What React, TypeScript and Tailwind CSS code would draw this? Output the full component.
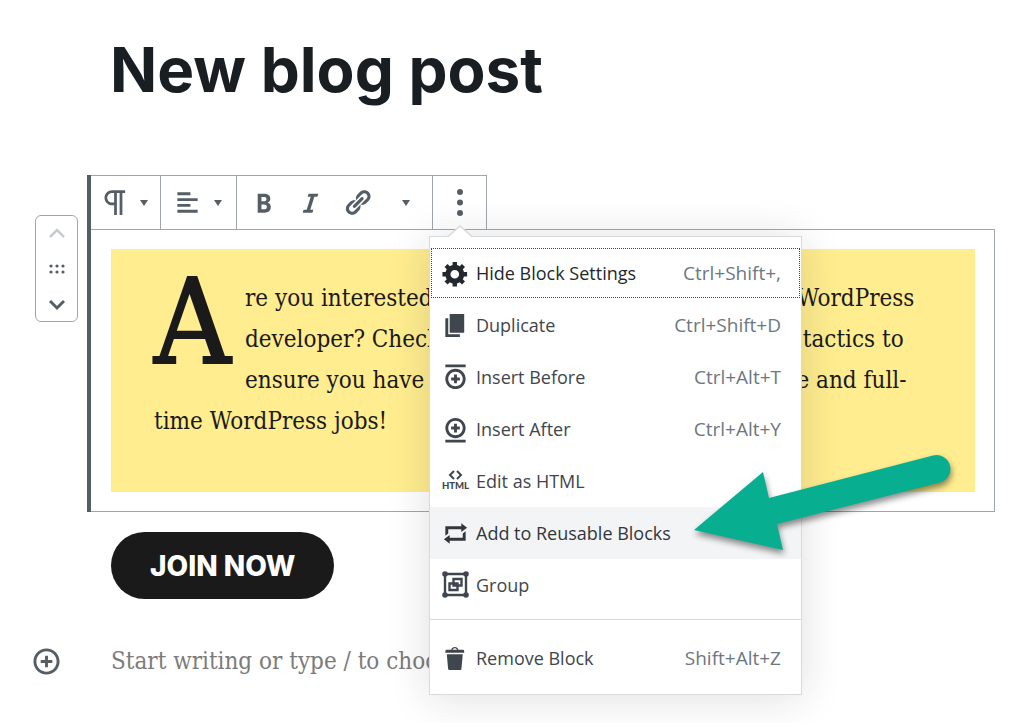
import type { ReactNode } from 'react';

type IconName =
  | 'gear'
  | 'duplicate'
  | 'before'
  | 'after'
  | 'repeat'
  | 'trash'
  | 'bold'
  | 'italic'
  | 'link'
  | 'align'
  | 'insert';

interface MenuItem {
  label: string;
  icon: ReactNode;
  shortcut?: string;
  state?: 'focused' | 'active';
}

const paths: Record<IconName, string> = {
  gear: 'M18 12h-2.18c-.17.7-.44 1.35-.81 1.93l1.54 1.54-2.1 2.1-1.54-1.54c-.58.36-1.23.63-1.91.79V19H8v-2.18c-.68-.16-1.33-.43-1.91-.79l-1.54 1.54-2.12-2.12 1.54-1.54c-.36-.58-.63-1.23-.79-1.91H1V9.03h2.17c.16-.7.44-1.35.8-1.94L2.43 5.55l2.1-2.1 1.54 1.54c.58-.37 1.24-.64 1.93-.81V2h3v2.18c.68.16 1.33.43 1.91.79l1.54-1.54 2.12 2.12-1.54 1.54c.36.59.64 1.24.8 1.94H18V12zm-8.5 1.5c1.66 0 3-1.34 3-3s-1.34-3-3-3-3 1.34-3 3 1.34 3 3 3z',
  duplicate: 'M6 15V2h10v13H6zm-1 1h8v2H3V5h2v11z',
  before:
    'M11 8H9v2H7v2h2v2h2v-2h2v-2h-2V8zm-1-4c-3.9 0-7 3.1-7 7s3.1 7 7 7 7-3.1 7-7-3.1-7-7-7zm0 12c-2.8 0-5-2.2-5-5s2.2-5 5-5 5 2.2 5 5-2.2 5-5 5zM3 1h14v2H3V1z',
  after:
    'M9 12h2v-2h2V8h-2V6H9v2H7v2h2v2zm1 4c3.9 0 7-3.1 7-7s-3.1-7-7-7-7 3.1-7 7 3.1 7 7 7zm0-12c2.8 0 5 2.2 5 5s-2.2 5-5 5-5-2.2-5-5 2.2-5 5-5zM3 19h14v-2H3v2z',
  repeat: 'M5 7v3l-2 1.5V5h11V3l4 3.01L14 9V7H5zm10 6v-3l2-1.5V15H6v2l-4-3.01L6 11v2h9z',
  trash:
    'M12 4h3c.6 0 1 .4 1 1v1H3V5c0-.6.5-1 1-1h3c.2-1.1 1.3-2 2.5-2s2.3.9 2.5 2zM8 4h3c-.2-.6-.9-1-1.5-1S8.2 3.4 8 4zM4 7h11l-.9 10.1c0 .5-.5.9-1 .9H5.9c-.5 0-.9-.4-1-.9L4 7z',
  bold: 'M6 4v13h4.54c1.37 0 2.46-.33 3.26-1 .8-.66 1.2-1.58 1.2-2.77 0-.84-.17-1.51-.51-2.01s-.9-.85-1.67-1.03v-.09c.57-.1 1.02-.4 1.36-.9s.51-1.13.51-1.91c0-1.14-.39-1.98-1.17-2.5C12.75 4.26 11.5 4 9.78 4H6zm2.57 5.15V6.26h1.36c.73 0 1.27.11 1.61.32.34.22.51.58.51 1.07 0 .54-.16.92-.47 1.15s-.82.35-1.51.35h-1.5zm0 2.19h1.6c1.44 0 2.16.53 2.16 1.61 0 .6-.17 1.05-.51 1.34s-.86.43-1.57.43H8.57v-3.38z',
  italic: 'M14.78 6h-2.13l-2.8 9h2.12l-.62 2H4.6l.62-2h2.14l2.8-9H8.03l.62-2h6.75z',
  link: 'M17.74 2.76c1.68 1.69 1.68 4.41 0 6.1l-1.53 1.52c-1.12 1.12-2.7 1.47-4.14 1.09l2.62-2.61.76-.77.76-.76c.84-.84.84-2.2 0-3.04-.84-.85-2.2-.85-3.04 0l-.77.76-3.38 3.38c-.37-1.44-.02-3.02 1.1-4.14l1.52-1.53c1.69-1.68 4.42-1.68 6.1 0zM8.59 13.43l5.34-5.34c.42-.42.42-1.1 0-1.52-.44-.43-1.13-.39-1.53 0l-5.33 5.34c-.42.42-.42 1.1 0 1.52.44.43 1.13.39 1.52 0zm-.76 2.29l4.14-4.15c.38 1.44.03 3.02-1.09 4.14l-1.52 1.53c-1.69 1.68-4.41 1.68-6.1 0-1.68-1.68-1.68-4.42 0-6.1l1.53-1.52c1.12-1.12 2.7-1.47 4.14-1.1l-4.14 4.15c-.85.84-.85 2.2 0 3.05.84.84 2.2.84 3.04 0z',
  align: 'M12 5V3H3v2h9zm5 4V7H3v2h14zm-5 4v-2H3v2h9zm5 4v-2H3v2h14z',
  insert:
    'M10 1c-5 0-9 4-9 9s4 9 9 9 9-4 9-9-4-9-9-9zm0 16c-3.9 0-7-3.1-7-7s3.1-7 7-7 7 3.1 7 7-3.1 7-7 7zm1-11H9v3H6v2h3v3h2v-3h3V9h-3V6z',
};

function Icon({ name }: { name: IconName }) {
  return (
    <svg viewBox="0 0 20 20" className="size-[29px] shrink-0" fill="currentColor" aria-hidden="true">
      <path d={paths[name]} />
    </svg>
  );
}

function HtmlIcon() {
  return (
    <svg viewBox="0 0 29 29" className="size-[29px] shrink-0" aria-hidden="true">
      <path d="M13 4l-4 4 4 4M16 4l4 4-4 4" fill="none" stroke="currentColor" strokeWidth="2" />
      <text x="14.5" y="22" textAnchor="middle" fontSize="9.5" fontWeight="900" fontFamily="Lato, sans-serif" fill="currentColor">
        HTML
      </text>
    </svg>
  );
}

function GroupIcon() {
  return (
    <svg viewBox="0 0 29 29" className="size-[29px] shrink-0" fill="none" stroke="currentColor" strokeWidth="2.4" aria-hidden="true">
      <path d="M4 3h21v21H4z" />
      <path d="M12.500 8h8v6.500h-8zM8.500 12.500h8v6.500h-8z" />
      <g fill="currentColor" stroke="none">
        <circle cx="4" cy="3" r="2.8" />
        <circle cx="25" cy="3" r="2.8" />
        <circle cx="4" cy="24" r="2.8" />
        <circle cx="25" cy="24" r="2.8" />
      </g>
    </svg>
  );
}

function ParagraphIcon() {
  return (
    <svg viewBox="0 0 24 24" className="size-[33px] shrink-0" fill="currentColor" aria-hidden="true">
      <path d="M11 5v7H9.5C7.6 12 6 10.4 6 8.5S7.6 5 9.5 5H11m8-2H9.5C6.5 3 4 5.5 4 8.5S6.5 14 9.5 14H11v7h2V5h2v16h2V5h2V3z" />
    </svg>
  );
}

function Caret() {
  return (
    <svg viewBox="0 0 8 6" className="h-[6px] w-2 shrink-0" fill="currentColor" aria-hidden="true">
      <path d="M0 0h8L4 6z" />
    </svg>
  );
}

const items: MenuItem[] = [
  { label: 'Hide Block Settings', icon: <Icon name="gear" />, shortcut: 'Ctrl+Shift+,', state: 'focused' },
  { label: 'Duplicate', icon: <Icon name="duplicate" />, shortcut: 'Ctrl+Shift+D' },
  { label: 'Insert Before', icon: <Icon name="before" />, shortcut: 'Ctrl+Alt+T' },
  { label: 'Insert After', icon: <Icon name="after" />, shortcut: 'Ctrl+Alt+Y' },
  { label: 'Edit as HTML', icon: <HtmlIcon /> },
  { label: 'Add to Reusable Blocks', icon: <Icon name="repeat" />, state: 'active' },
  { label: 'Group', icon: <GroupIcon /> },
];

const stateClass = {
  focused: 'text-[#23282d] outline-1 -outline-offset-2 outline-dotted outline-[#40464d]',
  active: 'text-[#32373c] bg-[#f3f4f5]',
};

function MenuRow({ item }: { item: MenuItem }) {
  return (
    <button
      type="button"
      role="menuitem"
      className={`flex h-[52px] w-full items-center gap-[6px] pl-[11px] pr-5 text-[18px] ${item.state ? stateClass[item.state] : 'text-[#40464d]'}`}
    >
      {item.icon}
      <span>{item.label}</span>
      {item.shortcut && <span className="ml-auto text-[19px] text-[#6c7781]">{item.shortcut}</span>}
    </button>
  );
}

function PointerArrow() {
  return (
    <svg
      viewBox="0 0 270 110"
      className="pointer-events-none absolute -top-14 left-[260px] h-[110px] w-[270px] drop-shadow-[1px_4px_3px_rgba(0,0,0,0.45)]"
      aria-hidden="true"
    >
      <path d="M4 79L73 21L79 47L243 4.500A13.800 13.800 0 0 1 250 31.500L87 73L93 99Z" fill="#08ae90" />
    </svg>
  );
}

function BlockMenu() {
  return (
    <div
      role="menu"
      className="absolute top-[60px] -left-1 z-10 w-[373px] border border-[#d8dbde] bg-white font-['Open_Sans','Noto_Sans',sans-serif] shadow-[0_3px_40px_rgba(25,30,35,0.14)]"
    >
      <svg viewBox="0 0 24 12" className="absolute -top-3 left-[18px] h-3 w-6" aria-hidden="true">
        <path d="M0 12L12 1L24 12Z" fill="#fff" />
        <path d="M0 11.500L12 1L24 11.500" fill="none" stroke="#d8dbde" strokeWidth="1.500" />
      </svg>
      <div className="pt-[10px] pb-2">
        {items.map((item) => (
          <div key={item.label} className="relative">
            <MenuRow item={item} />
            {item.state === 'active' && <PointerArrow />}
          </div>
        ))}
      </div>
      <div className="border-t border-[#d8dbde] pt-3 pb-[10px]">
        <MenuRow item={{ label: 'Remove Block', icon: <Icon name="trash" />, shortcut: 'Shift+Alt+Z' }} />
      </div>
    </div>
  );
}

function Toolbar() {
  return (
    <div role="toolbar" aria-label="Block tools" className="flex h-[54px] w-fit border-t border-r border-[#a0a5aa] text-[#555d66]">
      <button type="button" aria-label="Change block type" className="flex w-[70px] items-center gap-2 border-r border-[#a0a5aa] pl-2">
        <ParagraphIcon />
        <Caret />
      </button>
      <button type="button" aria-label="Change alignment" className="flex w-[76px] items-center gap-3 border-r border-[#a0a5aa] pl-3">
        <Icon name="align" />
        <Caret />
      </button>
      <div className="flex w-[196px] items-center gap-[18px] border-r border-[#a0a5aa] pl-3">
        <button type="button" aria-label="Bold">
          <Icon name="bold" />
        </button>
        <button type="button" aria-label="Italic">
          <Icon name="italic" />
        </button>
        <button type="button" aria-label="Link">
          <Icon name="link" />
        </button>
        <button type="button" aria-label="More rich text controls" className="pl-3">
          <Caret />
        </button>
      </div>
      <div className="relative w-[53px]">
        <button type="button" aria-label="More options" className="flex size-full items-center justify-center">
          <svg viewBox="0 0 6 27" className="h-[27px] w-[6px]" fill="currentColor" aria-hidden="true">
            <circle cx="3" cy="3" r="3" />
            <circle cx="3" cy="13.500" r="3" />
            <circle cx="3" cy="24" r="3" />
          </svg>
        </button>
        <BlockMenu />
      </div>
    </div>
  );
}

function Mover() {
  return (
    <div className="mt-10 flex h-[107px] w-[43px] flex-col items-center justify-between rounded-md border border-[#a0a5aa] py-[9px] text-[#555d66]">
      <button type="button" aria-label="Move up" className="text-[#c9cccf]">
        <svg viewBox="0 0 16 16" className="size-4" fill="none" stroke="currentColor" strokeWidth="2.500" aria-hidden="true">
          <path d="M1 12L8 5L15 12" />
        </svg>
      </button>
      <svg viewBox="0 0 16 10" className="h-[10px] w-4" fill="currentColor" aria-hidden="true">
        {[2, 8, 14].map((x) => (
          <g key={x}>
            <circle cx={x} cy="2" r="1.600" />
            <circle cx={x} cy="8" r="1.600" />
          </g>
        ))}
      </svg>
      <button type="button" aria-label="Move down">
        <svg viewBox="0 0 16 16" className="size-4" fill="none" stroke="currentColor" strokeWidth="3" aria-hidden="true">
          <path d="M1 5L8 12L15 5" />
        </svg>
      </button>
    </div>
  );
}

export default function App() {
  return (
    <main className="min-h-screen overflow-hidden bg-white pt-[26px] text-[#191e23]">
      <h1 className="pl-[110px] font-['Inter',sans-serif] text-[62px] leading-[87px] font-bold">New blog post</h1>

      <div className="mt-[62px] flex pr-[29px]">
        <div className="flex w-[87px] shrink-0 pl-[35px]">
          <Mover />
        </div>
        <section aria-label="Paragraph block" className="min-w-0 flex-1 border-l-4 border-[#555d66]">
          <Toolbar />
          <div className="border border-l-0 border-[#a0a5aa] py-[19px] pr-[19px] pl-5">
            <p className="min-h-[243px] bg-[#ffed8f] px-[43px] pt-[29px] pb-[49px] font-['DejaVu_Serif_Condensed','DejaVu_Serif',serif] text-[24px] leading-[41px] text-[#1a1a1a]">
              <span className="float-left w-[91px] text-[118px] leading-[88px] [-webkit-text-stroke:2px_#1a1a1a]">A</span>
              re you interested in landing your first job as a top WordPress developer? Check out our favorite
              tips and proven tactics to ensure you have the best chances at both freelance and full-time
              WordPress jobs!
            </p>
          </div>
        </section>
      </div>

      <div className="mt-5 pl-[111px]">
        <button type="button" className="h-[67px] rounded-full bg-[#1a1a1a] px-[39px] font-['Inter',sans-serif] text-[28px] font-extrabold text-white">
          JOIN NOW
        </button>
      </div>

      <div className="mt-9 flex h-[52px] items-center gap-[50px] pr-[29px] pl-8 text-[#555d66]">
        <button type="button" aria-label="Add block">
          <Icon name="insert" />
        </button>
        <input
          aria-label="Add a new block"
          placeholder="Start writing or type / to choose a block"
          className="min-w-0 flex-1 font-['DejaVu_Serif_Condensed','DejaVu_Serif',serif] text-[24px] outline-none placeholder:text-[#7b7b7b]"
        />
      </div>
    </main>
  );
}
